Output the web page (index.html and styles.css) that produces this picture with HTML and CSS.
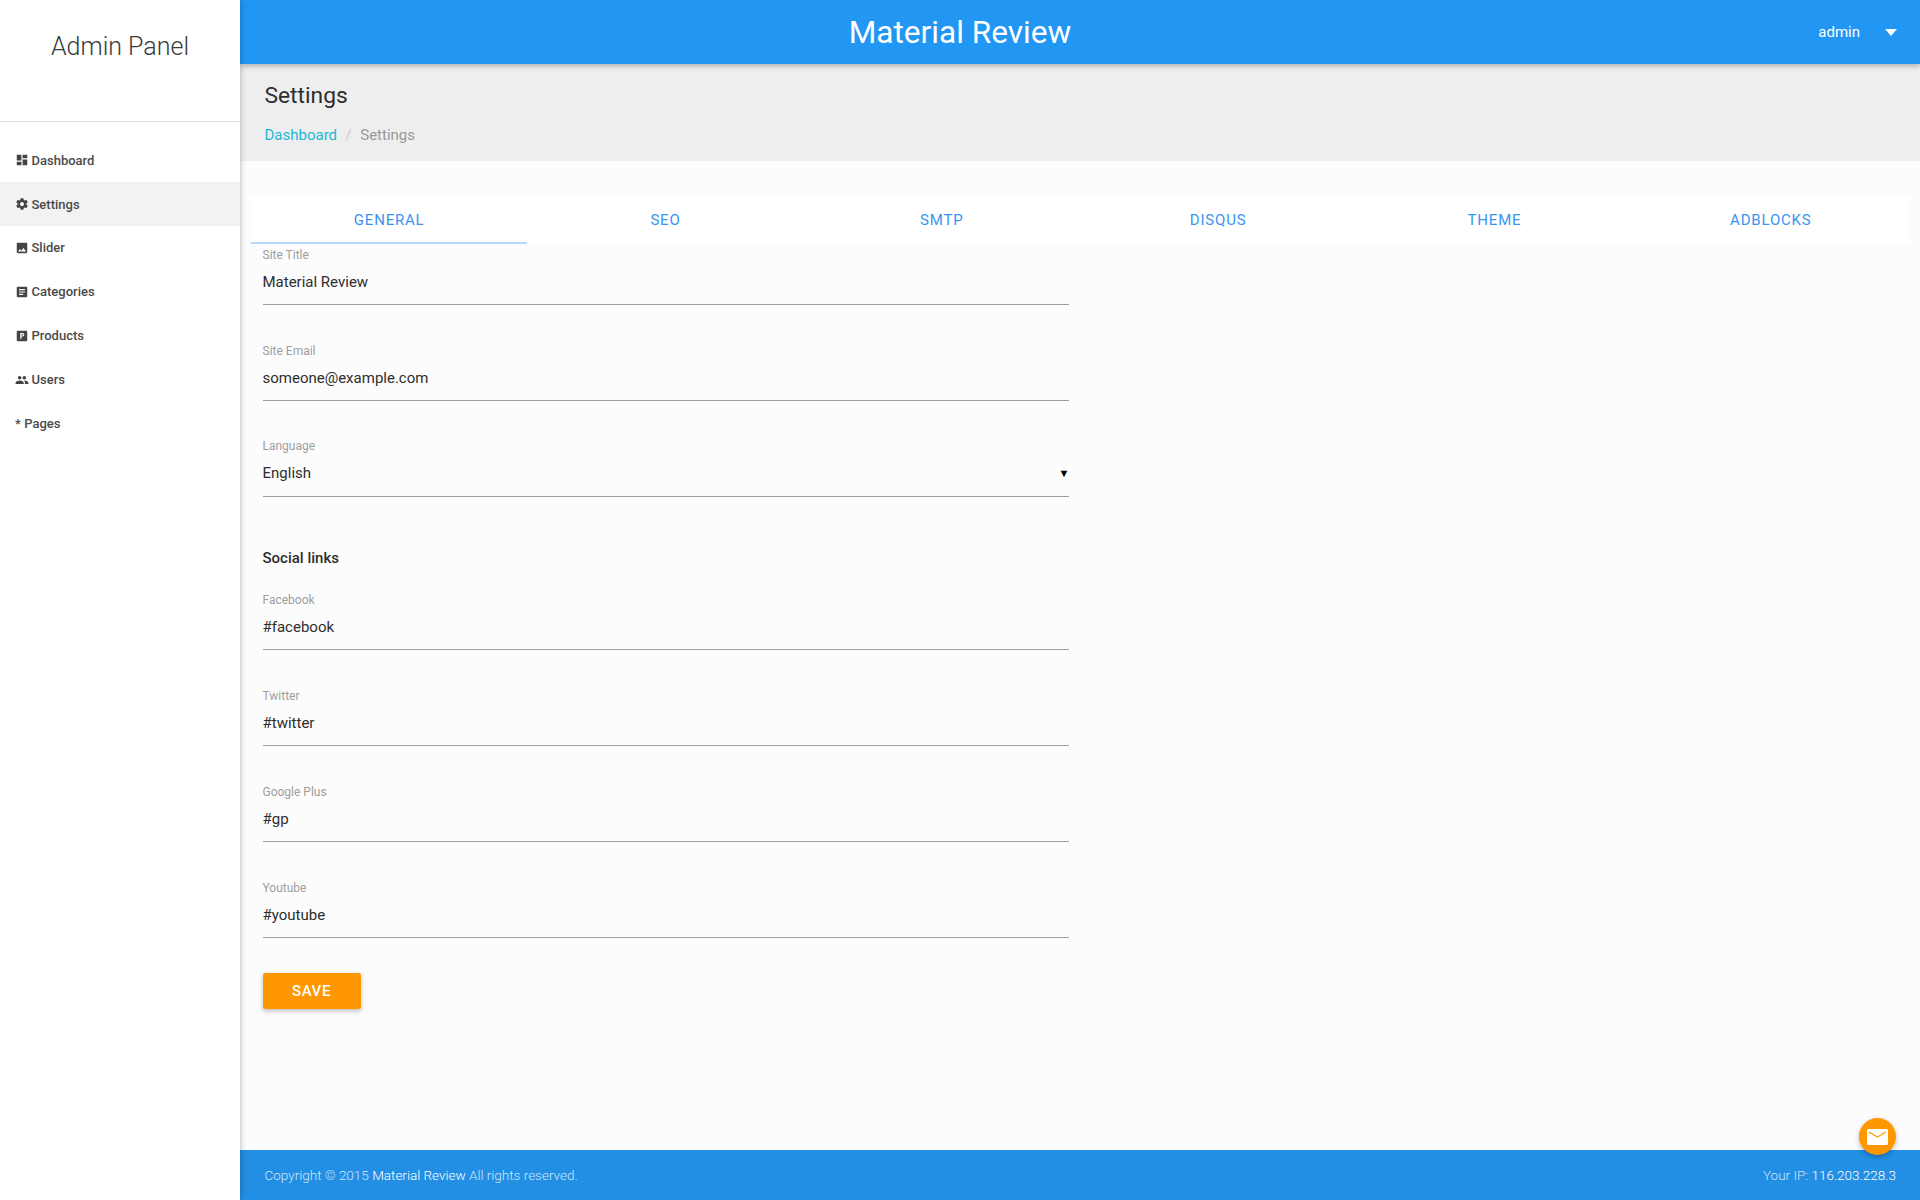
FILE: index.html
```html
<!DOCTYPE html>
<html lang="en">
<head>
<meta charset="utf-8">
<title>Settings - Material Review</title>
<link rel="stylesheet" href="styles.css">
</head>
<body>
<div class="app">
  <aside class="sidebar">
    <div class="brand">Admin Panel</div>
    <nav class="nav">
      <a class="nav-item"><svg class="nav-icon" viewBox="0 0 24 24"><path d="M3 13h8V3H3v10zm0 8h8v-6H3v6zm10 0h8V11h-8v10zm0-18v6h8V3h-8z"/></svg>Dashboard</a>
      <a class="nav-item active"><svg class="nav-icon" viewBox="0 0 24 24"><path d="M19.43 12.98c.04-.32.07-.64.07-.98s-.03-.66-.07-.98l2.11-1.65c.19-.15.24-.42.12-.64l-2-3.46c-.12-.22-.39-.3-.61-.22l-2.49 1c-.52-.4-1.08-.73-1.69-.98l-.38-2.65C14.46 2.18 14.25 2 14 2h-4c-.25 0-.46.18-.49.42l-.38 2.65c-.61.25-1.17.59-1.69.98l-2.49-1c-.23-.09-.49 0-.61.22l-2 3.46c-.13.22-.07.49.12.64l2.11 1.65c-.04.32-.07.65-.07.98s.03.66.07.98l-2.11 1.65c-.19.15-.24.42-.12.64l2 3.46c.12.22.39.3.61.22l2.49-1c.52.4 1.08.73 1.69.98l.38 2.65c.03.24.24.42.49.42h4c.25 0 .46-.18.49-.42l.38-2.65c.61-.25 1.17-.59 1.69-.98l2.49 1c.23.09.49 0 .61-.22l2-3.46c.12-.22.07-.49-.12-.64l-2.11-1.65zM12 15.5c-1.93 0-3.5-1.57-3.5-3.5s1.57-3.5 3.5-3.5 3.5 1.57 3.5 3.5-1.57 3.5-3.5 3.5z"/></svg>Settings</a>
      <a class="nav-item"><svg class="nav-icon" viewBox="0 0 24 24"><path d="M21 19V5c0-1.1-.9-2-2-2H5c-1.1 0-2 .9-2 2v14c0 1.1.9 2 2 2h14c1.1 0 2-.9 2-2zM8.5 13.5l2.5 3.01L14.5 12l4.5 6H5l3.5-4.5z"/></svg>Slider</a>
      <a class="nav-item"><svg class="nav-icon" viewBox="0 0 24 24"><path d="M19 3H5c-1.1 0-2 .9-2 2v14c0 1.1.9 2 2 2h14c1.1 0 2-.9 2-2V5c0-1.1-.9-2-2-2zm-5 14H7v-2h7v2zm3-4H7v-2h10v2zm0-4H7V7h10v2z"/></svg>Categories</a>
      <a class="nav-item"><svg class="nav-icon" viewBox="0 0 24 24"><path fill-rule="evenodd" d="M19 3H5c-1.1 0-2 .9-2 2v14c0 1.1.9 2 2 2h14c1.1 0 2-.9 2-2V5c0-1.1-.9-2-2-2zM13 13h-2v4H9V7h4c1.66 0 3 1.34 3 3s-1.34 3-3 3zm0-4h-2v2h2c.55 0 1-.45 1-1s-.45-1-1-1z"/></svg>Products</a>
      <a class="nav-item"><svg class="nav-icon" viewBox="0 0 24 24"><path d="M16 11c1.66 0 2.99-1.34 2.99-3S17.66 5 16 5c-1.66 0-3 1.34-3 3s1.34 3 3 3zm-8 0c1.66 0 2.99-1.34 2.99-3S9.66 5 8 5C6.34 5 5 6.34 5 8s1.34 3 3 3zm0 2c-2.33 0-7 1.17-7 3.5V19h14v-2.5c0-2.33-4.67-3.5-7-3.5zm8 0c-.29 0-.62.02-.97.05 1.16.84 1.97 1.97 1.97 3.45V19h6v-2.5c0-2.33-4.67-3.5-7-3.5z"/></svg>Users</a>
      <a class="nav-item star-item"><span class="nav-star">*</span>Pages</a>
    </nav>
  </aside>
  <div class="main">
    <header class="topbar">
      <div class="site-title">Material Review</div>
      <div class="user">admin<span class="caret"></span></div>
    </header>
    <section class="page-head">
      <h1 class="page-title">Settings</h1>
      <div class="crumbs"><a class="crumb-link">Dashboard</a><span class="crumb-sep">/</span><span class="crumb-current">Settings</span></div>
    </section>
    <main class="content">
      <div class="tabs">
        <div class="tab current">General</div>
        <div class="tab">SEO</div>
        <div class="tab">SMTP</div>
        <div class="tab">Disqus</div>
        <div class="tab">Theme</div>
        <div class="tab">Adblocks</div>
      </div>
      <form class="form">
        <div class="field"><div class="field-label">Site Title</div><div class="field-value">Material Review</div></div>
        <div class="field"><div class="field-label">Site Email</div><div class="field-value">someone@example.com</div></div>
        <div class="field field-select"><div class="field-label">Language</div><div class="field-value">English<span class="select-arrow">▼</span></div></div>
        <div class="section-title">Social links</div>
        <div class="field"><div class="field-label">Facebook</div><div class="field-value">#facebook</div></div>
        <div class="field"><div class="field-label">Twitter</div><div class="field-value">#twitter</div></div>
        <div class="field"><div class="field-label">Google Plus</div><div class="field-value">#gp</div></div>
        <div class="field"><div class="field-label">Youtube</div><div class="field-value">#youtube</div></div>
        <div class="btn">Save</div>
      </form>
    </main>
    <footer class="footer">
      <div class="foot-text">Copyright © 2015 <b class="foot-strong">Material Review</b> All rights reserved.</div>
      <div class="foot-text">Your IP: <b class="foot-strong">116.203.228.3</b></div>
    </footer>
    <div class="fab"><svg class="fab-icon" viewBox="0 0 21 16"><rect width="21" height="16" rx="1.5" fill="#fff"/><path d="M2 3l8.5 5L19 3" fill="none" stroke="#ff9800" stroke-width="1.2"/></svg></div>
  </div>
</div>
</body>
</html>
```
FILE: styles.css
```css
* { box-sizing: border-box; }
html, body { margin: 0; height: 100%; }
body { font-family: Roboto, "Liberation Sans", sans-serif; background: #fcfcfc; color: #2e2e2e; }
.app { display: flex; height: 1200px; overflow: hidden; }

.sidebar { width: 240px; flex: none; background: #fff; box-shadow: 0 0 6px rgba(0,0,0,.3); position: relative; z-index: 2; }
.brand { height: 122px; padding-top: 31px; text-align: center; font-size: 25px; font-weight: 300; line-height: 32px; color: #3a3a3a; border-bottom: 1px solid #ddd; }
.nav { padding-top: 16.2px; }
.nav-item { display: flex; align-items: center; height: 43.9px; padding-left: 14.5px; font-size: 13px; font-weight: 500; color: #4a4a4a; }
.nav-item.active { background: #f2f2f2; }
.star-item { padding-left: 15px; }
.nav-icon { width: 14px; height: 14px; margin-right: 3px; fill: #444; flex: none; }
.nav-star { margin-right: 3.5px; }

.main { flex: 1; min-width: 0; display: flex; flex-direction: column; position: relative; }
.topbar { height: 64px; flex: none; background: #2196f3; color: #fff; display: flex; align-items: center; justify-content: center; padding-right: 240px; position: relative; z-index: 1; box-shadow: 0 2px 5px rgba(0,0,0,.26); }
.site-title { font-size: 31.6px; font-weight: 400; }
.user { position: absolute; right: 23px; top: 0; height: 64px; display: flex; align-items: center; font-size: 15px; }
.caret { width: 0; height: 0; margin-left: 24.5px; margin-right: .5px; border-left: 6.5px solid transparent; border-right: 6.5px solid transparent; border-top: 7px solid #fff; }

.page-head { height: 97px; flex: none; background: #eee; padding: 17px 24px 0 24.5px; }
.page-title { margin: 0; font-size: 22.8px; font-weight: 400; line-height: 30px; color: #2e2e2e; }
.crumbs { margin-top: 13px; font-size: 15px; line-height: 22px; color: #999; }
.crumb-link { color: #26b6d4; }
.crumb-sep { margin: 0 8.5px; color: #ccc; }

.content { flex: 1; padding: 35px 11px 0; }
.tabs { display: flex; height: 48px; background: #fff; }
.tab { flex: 1; display: flex; align-items: center; justify-content: center; font-size: 15px; letter-spacing: .8px; text-transform: uppercase; color: #3a94f0; }
.tab.current { box-shadow: inset 0 -2px 0 #b3dafa; }
.form { padding: 0 12px 0 11.5px; width: 829.5px; }
.field { height: 96px; padding-top: 4px; }
.field-label { font-size: 12px; line-height: 14px; color: #9e9e9e; }
.field-value { display: flex; justify-content: space-between; align-items: center; margin-top: 5px; height: 38px; padding-bottom: 7px; font-size: 15px; color: #2e2e2e; border-bottom: 1px solid #9e9e9e; }
.field-select { padding-top: 3px; }
.field-select .field-value { margin-top: 6px; padding-bottom: 9px; }
.select-arrow { font-size: 11px; color: #000; margin-right: -1px; }
.section-title { font-size: 15px; font-weight: 500; line-height: 18px; color: #2e2e2e; margin: 17px 0 22px; }
.btn { display: flex; align-items: center; justify-content: center; width: 98px; height: 36px; border-radius: 2px; background: #ff9800; color: #fff; font-size: 15px; font-weight: 500; text-transform: uppercase; letter-spacing: .6px; box-shadow: 0 2px 5px rgba(0,0,0,.26); }

.footer { height: 50px; flex: none; background: #228ee4; display: flex; justify-content: space-between; align-items: center; padding: 0 24px 0 24.5px; }
.foot-text { font-size: 13.5px; font-weight: 300; color: #cfe6fb; }
.foot-strong { font-weight: 300; color: #fff; }
.fab { position: absolute; right: 24px; bottom: 45px; width: 37px; height: 37px; border-radius: 50%; background: #ff9800; display: flex; align-items: center; justify-content: center; box-shadow: 0 2px 5px rgba(0,0,0,.26); }
.fab-icon { width: 21px; height: 16px; display: block; }
```
